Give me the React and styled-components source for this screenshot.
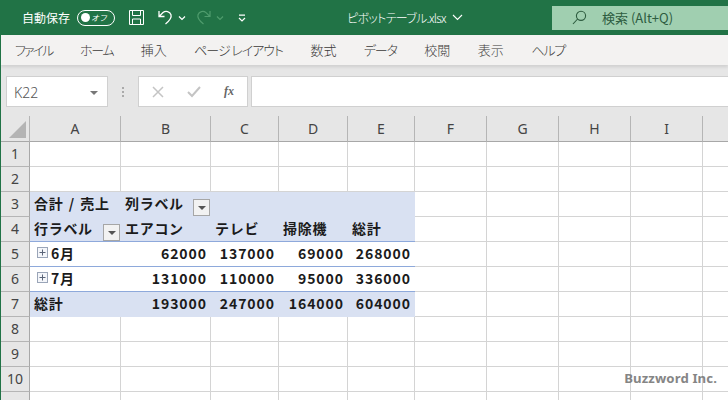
import React from "react";
import styled, { createGlobalStyle } from "styled-components";

const Global = createGlobalStyle`
  html, body { margin: 0; padding: 0; height: 400px; overflow: hidden; background: #fff; }
  #root { height: 400px; }
  * { box-sizing: border-box; }
`;
const UI = `"Noto Sans CJK JP", "Noto Sans", sans-serif`;

const Page = styled.div`
  width: 728px; height: 400px; display: flex; flex-direction: column; position: relative;
  overflow: hidden; font-family: ${UI}; border-left: 1px solid #217346;
`;
const TitleBar = styled.header`
  height: 35px; margin-left: -1px; flex: none; background: #217346; color: #fff; display: flex; align-items: center;
`;
const Quick = styled.div`display: flex; align-items: center; width: 347px; padding-left: 22px; flex: none;`;
const AutoSave = styled.span`font-size: 12px; font-weight: 400; line-height: 16px; width: 55px; flex: none;`;
const Toggle = styled.span`
  width: 38px; height: 16px; border: 1px solid #fff; border-radius: 8px; flex: none;
  display: flex; align-items: center; justify-content: space-between; padding: 0 7px 0 3px;
  font-size: 8px; font-style: italic; line-height: 1;
`;
const Knob = styled.i`width: 9px; height: 9px; border-radius: 50%; background: #fff; display: block;`;
const QIcon = styled.svg`flex: none; display: block; margin-left: ${p => p.$ml}px;`;
const FileName = styled.div`
  width: 205px; flex: none; display: flex; align-items: center; gap: 6px; font-size: 12px; font-weight: 300;
  font-feature-settings: "palt"; letter-spacing: -.7px;
`;
const SearchBox = styled.div`
  width: 176px; height: 24px; flex: none; margin-top: 1px; background: #a0cfb0; color: #2d5c3f;
  display: flex; align-items: center; padding: 0 0 1px 20px; gap: 15px; font-size: 13px; font-weight: 400;
`;
const Tabs = styled.nav`
  height: 30px; flex: none; background: #f3f2f1; display: flex; align-items: center; gap: 27.5px; padding: 0 0 1px 14px;
  font-size: 13px; font-weight: 300; color: #3b3a39; box-shadow: 0 2px 3px rgba(0,0,0,.1); position: relative;
  font-feature-settings: "palt";
`;
const Tab = styled.span`letter-spacing: ${p => p.$ls}px; white-space: nowrap;`;
const FormulaArea = styled.div`
  height: 51px; flex: none; background: #e6e6e6; display: flex; align-items: flex-start; padding: 11px 0 0 5px;
`;
const NameBox = styled.div`
  width: 102px; height: 31px; background: #fff; border: 1px solid #d0d0d0; flex: none; display: flex;
  align-items: center; justify-content: space-between; padding: 2px 9px 0 7px; font-size: 14px; color: #555; font-weight: 300;
  font-family: "Noto Sans", sans-serif;
`;
const Caret = styled.i`width: 0; height: 0; border: 4px solid transparent; border-top: 4px solid #777; border-bottom: 0; display: block;`;
const Grip = styled.div`
  width: 30px; height: 31px; flex: none; display: flex; flex-direction: column; align-items: center; justify-content: center; gap: 2px;
  i { width: 2px; height: 2px; background: #aaa; display: block; }
`;
const Buttons = styled.div`
  width: 110px; height: 31px; background: #fff; border: 1px solid #d0d0d0; flex: none; display: flex; align-items: center;
  padding-left: 12px; gap: 22px;
`;
const Fx = styled.span`font: italic bold 12px "Liberation Serif", serif; color: #666; margin-left: 1px;`;
const Input = styled.div`flex: 1; height: 31px; margin-left: 3px; background: #fff; border: 1px solid #d0d0d0; border-right: 0;`;

const Sheet = styled.div`
  display: grid; flex: none; background: #fff;
  grid-template-columns: 29px 91px 90px 68px 69px 67px 72px 72px 72px 72px 72px;
  grid-template-rows: 26px;
  grid-auto-rows: 25px;
`;
const Corner = styled.div`
  background: #e6e6e6; border-right: 1px solid #b5b5b5; border-bottom: 1px solid #a8a8a8; display: flex; align-items: flex-end; justify-content: flex-end; padding: 0 3px 3px 0;
  i { width: 0; height: 0; display: block; border-style: solid; border-width: 0 0 17px 17px; border-color: transparent transparent #b4b4b4 transparent; }
`;
const ColHead = styled.div`
  background: #e6e6e6; border-right: 1px solid #b5b5b5; border-bottom: 1px solid #a8a8a8;
  display: flex; align-items: center; justify-content: center; font-size: 14px; color: #444; font-family: "Noto Sans", sans-serif;
`;
const RowHead = styled.div`
  background: #e6e6e6; border-right: 1px solid #a8a8a8; border-bottom: 1px solid #b5b5b5; padding-bottom: 2px;
  display: flex; align-items: center; justify-content: center; font-size: 14px; color: #444; font-family: "Noto Sans", sans-serif;
`;
const Cell = styled.div`
  border-right: 1px solid #d4d4d4; border-bottom: 1px solid #d4d4d4;
`;
const PivotCell = styled.div`
  background: ${p => (p.$band ? "#d9e1f2" : "#fff")};
  border-bottom: 1px solid ${p => (p.$line ? "#8ea9db" : p.$band ? "#d9e1f2" : "#d4d4d4")};
  display: flex; align-items: center; padding: 0 4px 3px 4px; white-space: nowrap;
  justify-content: ${p => (p.$num ? "flex-end" : p.$split ? "space-between" : "flex-start")};
  font-size: 14px; font-weight: 700; color: #1b1b1b; word-spacing: 1.5px;
  letter-spacing: ${p => (p.$num ? ".95px" : ".7px")};
  font-family: ${UI};
`;
const Filter = styled.span`
  width: 17px; height: 17px; flex: none; background: #f2f2f2; border: 1px solid #a6a6a6; align-self: flex-end;
  display: flex; align-items: center; justify-content: center; margin: 0 -3px -3px 0;
  i { width: 0; height: 0; display: block; border: 4px solid transparent; border-top: 4px solid #555; border-bottom: 0; }
`;
const Expand = styled.svg`display: block; flex: none; margin: 0 3px 0 3px;`;
const Mark = styled.div`
  position: absolute; right: 11px; bottom: 13px; font: 700 13.2px "Noto Sans", sans-serif; color: #7f7f7f; letter-spacing: .1px; opacity: .95;
`;

const Chev = ({ ml, color = "#fff" }) => (
  <QIcon $ml={ml} width="8" height="6" viewBox="0 0 8 6"><path d="M1 1.5 4 4.5 7 1.5" fill="none" stroke={color} strokeWidth="1.2" /></QIcon>
);

const tabs = [
  ["ファイル", -1.9], ["ホーム", -1.3], ["挿入", 0], ["ページ レイアウト", -1.05], ["数式", 0],
  ["データ", -1.15], ["校閲", 0], ["表示", 0], ["ヘルプ", -1.2],
];
const cols = ["A", "B", "C", "D", "E", "F", "G", "H", "I", "J"];
const pivot = {
  3: [["合計 / 売上"], ["列ラベル", "split"], [""], [""], [""]],
  4: [["行ラベル", "split"], ["エアコン"], ["テレビ"], ["掃除機"], ["総計"]],
  5: [["6月", "exp"], [62000], [137000], [69000], [268000]],
  6: [["7月", "exp"], [131000], [110000], [95000], [336000]],
  7: [["総計"], [193000], [247000], [164000], [604000]],
};
const rows = [1, 2, 3, 4, 5, 6, 7, 8, 9, 10, 11];

export default function App() {
  return (
    <Page>
      <Global />
      <TitleBar>
        <Quick>
          <AutoSave>自動保存</AutoSave>
          <Toggle><Knob />オフ</Toggle>
          <QIcon $ml={13} width="17" height="17" viewBox="0 0 17 17" fill="none" stroke="#fff" strokeWidth="1">
            <path d="M1.5 1.5h14v14h-14zM4.5 1.5v5h8v-5M4.5 15.5v-5.5h8v5.5" />
          </QIcon>
          <QIcon $ml={13} width="16" height="17" viewBox="0 0 16 17" fill="none" stroke="#fff" strokeWidth="1.3">
            <path d="M1 2v5.5h5.5M1.3 7.2 5 3.6a5 5 0 0 1 8 2.2c.9 3-1 5.6-5.5 9.2" />
          </QIcon>
          <Chev ml={4} />
          <QIcon $ml={9} width="16" height="17" viewBox="0 0 16 17" fill="none" stroke="#4f9c6d" strokeWidth="1.2">
            <path d="M15 2v5.5H9.5M14.7 7.2 11 3.6a5 5 0 0 0-8 2.2c-.9 3 1 5.6 5.5 9.2" />
          </QIcon>
          <Chev ml={5} color="#4f9c6d" />
          <QIcon $ml={14} width="8" height="8" viewBox="0 0 8 8" fill="none" stroke="#fff" strokeWidth="1.2">
            <path d="M1 1.2h6M1 4l3 3 3-3" />
          </QIcon>
        </Quick>
        <FileName>
          ピボットテーブル.xlsx
          <svg width="11" height="7" viewBox="0 0 11 7"><path d="M1 1l4.5 4.5L10 1" fill="none" stroke="#fff" strokeWidth="1.1" /></svg>
        </FileName>
        <SearchBox>
          <svg width="15" height="15" viewBox="0 0 15 15" fill="none" stroke="#2d5c3f" strokeWidth="1.1"><circle cx="9" cy="5.8" r="4.6" /><path d="M5.6 9 1 14" /></svg>
          検索 (Alt+Q)
        </SearchBox>
      </TitleBar>
      <Tabs>
        {tabs.map(([t, ls]) => <Tab key={t} $ls={ls}>{t}</Tab>)}
      </Tabs>
      <FormulaArea>
        <NameBox>K22<Caret /></NameBox>
        <Grip><i /><i /><i /></Grip>
        <Buttons>
          <svg width="14" height="12" viewBox="0 0 14 12" fill="none" stroke="#c4c4c4" strokeWidth="1.5"><path d="M2 1l10 10M12 1 2 11" /></svg>
          <svg width="14" height="12" viewBox="0 0 14 12" fill="none" stroke="#c4c4c4" strokeWidth="2"><path d="M1 6l4 4 8-9" /></svg>
          <Fx>fx</Fx>
        </Buttons>
        <Input />
      </FormulaArea>
      <Sheet>
        <Corner><i /></Corner>
        {cols.map(c => <ColHead key={c}>{c !== "J" ? c : ""}</ColHead>)}
        {rows.flatMap(r => [
          <RowHead key={"h" + r}>{r < 11 ? r : ""}</RowHead>,
          ...cols.map((c, i) => {
            const row = pivot[r];
            if (!row || i > 4) return <Cell key={c + r} />;
            const [val, kind] = row[i];
            const isNum = typeof val === "number";
            return (
              <PivotCell key={c + r} $band={r === 3 || r === 4 || r === 7} $line={r >= 4 && r <= 6} $num={isNum} $split={kind === "split"}>
                {kind === "exp" && (
                  <Expand width="11" height="11" viewBox="0 0 11 11">
                    <rect x=".5" y=".5" width="10" height="10" fill="#f4f6fa" stroke="#9aa5b8" />
                    <path d="M2.5 5.5h6M5.5 2.5v6" stroke="#5a6478" />
                  </Expand>
                )}
                <span>{val}</span>
                {kind === "split" && <Filter><i /></Filter>}
              </PivotCell>
            );
          }),
        ])}
      </Sheet>
      <Mark>Buzzword Inc.</Mark>
    </Page>
  );
}
